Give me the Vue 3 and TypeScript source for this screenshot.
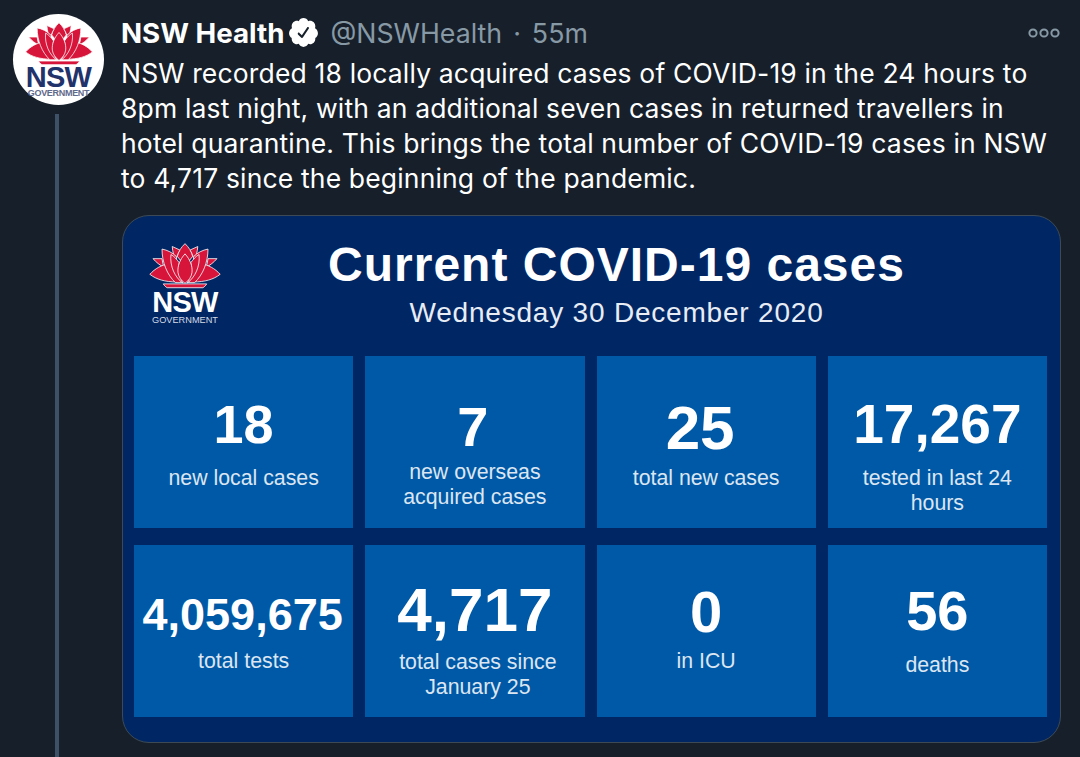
<template>
  <div class="tweet">
    <svg class="defs" width="0" height="0" aria-hidden="true">
      <symbol id="waratah" viewBox="-2 -2 224 144">
        <g fill="#d7153a" stroke="#fff" stroke-width="2.5" stroke-linejoin="round">
          <path d="M110 0C122 12 132 26 134 40L110 70L86 40C88 26 98 12 110 0Z" />
          <path d="M70 9L94 20C90 28 86 34 84 42L74 34C72 26 71 18 70 9Z" />
          <path d="M150 9L126 20C130 28 134 34 136 42L146 34C148 26 149 18 150 9Z" />
          <path d="M10 47H38C39 56 41 65 44 74C32 68 19 58 10 47Z" />
          <path d="M210 47H182C181 56 179 65 176 74C188 68 201 58 210 47Z" />
          <path d="M0 96C16 78 38 66 58 64C64 84 72 106 84 120C48 120 20 112 0 96Z" />
          <path d="M220 96C204 78 182 66 162 64C156 84 148 106 136 120C172 120 200 112 220 96Z" />
          <path d="M38 17C54 20 72 28 84 42C78 66 82 100 100 122H80C54 98 38 58 38 17Z" />
          <path d="M182 17C166 20 148 28 136 42C142 66 138 100 120 122H140C166 98 182 58 182 17Z" />
          <path d="M66 34C76 40 84 48 92 60C88 80 92 104 104 124C78 106 62 70 66 34Z" />
          <path d="M154 34C144 40 136 48 128 60C132 80 128 104 116 124C142 106 158 70 154 34Z" />
          <path d="M110 32C126 50 134 70 132 90C130 104 122 116 110 124C98 116 90 104 88 90C86 70 94 50 110 32Z" />
          <path d="M42 126H178C174 132 170 136 166 138H54C50 136 46 132 42 126Z" />
        </g>
      </symbol>
    </svg>

    <aside class="rail">
      <div class="avatar">
        <svg class="avatar-flower"><use href="#waratah" /></svg>
        <div class="avatar-nsw">NSW</div>
        <div class="avatar-gov">GOVERNMENT</div>
      </div>
      <div class="thread"></div>
    </aside>

    <main class="content">
      <header class="head">
        <span class="name">NSW Health</span>
        <svg class="badge" viewBox="0 0 24 24">
          <path fill="#fff" d="M22.5 12.5c0-1.58-.875-2.95-2.148-3.6.154-.435.238-.905.238-1.4 0-2.21-1.71-3.998-3.818-3.998-.47 0-.92.084-1.336.25C14.818 2.415 13.51 1.5 12 1.5s-2.816.917-3.437 2.25c-.415-.165-.866-.25-1.336-.25-2.11 0-3.818 1.79-3.818 4 0 .494.083.964.237 1.4-1.272.65-2.147 2.018-2.147 3.6 0 1.495.782 2.798 1.942 3.486-.02.17-.032.34-.032.514 0 2.21 1.708 4 3.818 4 .47 0 .92-.086 1.335-.25.62 1.334 1.926 2.25 3.437 2.25 1.512 0 2.818-.916 3.437-2.25.415.163.865.248 1.336.248 2.11 0 3.818-1.79 3.818-4 0-.174-.012-.344-.033-.513 1.158-.687 1.943-1.99 1.943-3.484zm-6.616-3.334l-4.334 6.5c-.145.217-.382.334-.625.334-.143 0-.288-.04-.416-.126l-.115-.094-2.415-2.415c-.293-.293-.293-.768 0-1.06s.768-.294 1.06 0l1.77 1.767 3.825-5.74c.23-.345.696-.436 1.04-.207.346.23.44.696.21 1.04z" />
        </svg>
        <span class="meta">@NSWHealth · 55m</span>
        <svg class="more" viewBox="0 0 32 12">
          <circle cx="5" cy="6" r="3.6" />
          <circle cx="16" cy="6" r="3.6" />
          <circle cx="27" cy="6" r="3.6" />
        </svg>
      </header>

      <p class="text">
        NSW recorded 18 locally acquired cases of COVID-19 in the 24 hours to<br />
        8pm last night, with an additional seven cases in returned travellers in<br />
        hotel quarantine. This brings the total number of COVID-19 cases in NSW<br />
        to 4,717 since the beginning of the pandemic.
      </p>

      <section class="card">
        <div class="card-top">
          <div class="logo">
            <svg class="logo-flower"><use href="#waratah" /></svg>
            <div class="logo-nsw">NSW</div>
            <div class="logo-gov">GOVERNMENT</div>
          </div>
          <div class="titles">
            <h1>Current COVID-19 cases</h1>
            <h2>Wednesday 30 December 2020</h2>
          </div>
        </div>

        <div class="grid">
          <div v-for="s in stats" :key="s.label" class="tile" :style="{ paddingTop: s.top + 'px' }">
            <div class="num" :style="{ fontSize: s.size + 'px', paddingRight: s.pad + 'px' }">{{ s.value }}</div>
            <div class="label" :style="{ marginTop: s.gap + 'px', paddingLeft: s.labelPad + 'px' }">{{ s.label }}</div>
          </div>
        </div>
      </section>
    </main>
  </div>
</template>

<script setup lang="ts">
interface Stat {
  value: string
  label: string
  size: number
  top: number
  gap: number
  pad: number
  labelPad: number
}

// the tiles in the graphic are not evenly set, so each one carries its own spacing
const stats: Stat[] = [
  { value: '18', label: 'new local cases', size: 54, top: 40, gap: 14, pad: 0, labelPad: 0 },
  { value: '7', label: 'new overseas\nacquired cases', size: 56, top: 43, gap: 5, pad: 4, labelPad: 0 },
  { value: '25', label: 'total new cases', size: 62, top: 44, gap: 10, pad: 12, labelPad: 0 },
  { value: '17,267', label: 'tested in last 24\nhours', size: 55, top: 40, gap: 14, pad: 0, labelPad: 0 },
  { value: '4,059,675', label: 'total tests', size: 45, top: 42, gap: 6, pad: 2, labelPad: -2 },
  { value: '4,717', label: 'total cases since\nJanuary 25', size: 62, top: 37, gap: 12, pad: 0, labelPad: 6 },
  { value: '0', label: 'in ICU', size: 58, top: 39, gap: 9, pad: 0, labelPad: 0 },
  { value: '56', label: 'deaths', size: 56, top: 38, gap: 14, pad: 0, labelPad: 0 }
]
</script>

<style scoped>
.defs {
  position: absolute;
}
.tweet {
  display: flex;
  height: 757px;
  overflow: hidden;
  background: #17202a;
  color: #fff;
  font-family: Inter, 'Liberation Sans', sans-serif;
}
.rail {
  width: 121px;
  flex: none;
  padding: 14px 0 0 13px;
  box-sizing: border-box;
  display: flex;
  flex-direction: column;
}
.avatar {
  width: 91px;
  height: 91px;
  border-radius: 50%;
  background: #fff;
  display: flex;
  flex-direction: column;
  align-items: center;
  font-family: 'Liberation Sans', sans-serif;
}
.avatar-flower {
  width: 68px;
  height: 44px;
  margin-top: 8px;
}
.avatar-nsw {
  font-size: 29px;
  line-height: 23px;
  font-weight: 700;
  letter-spacing: -0.8px;
  color: #22336b;
}
.avatar-gov {
  font-size: 9px;
  line-height: 9px;
  font-weight: 700;
  letter-spacing: -0.3px;
  color: #5f6a8c;
}
.thread {
  width: 4px;
  flex: 1;
  margin: 9px 0 0 42px;
  background: #3d5266;
}
.content {
  width: 940px;
  flex: none;
}
.head {
  height: 37px;
  margin-top: 14px;
  display: flex;
  align-items: center;
}
.name {
  font-size: 27.7px;
  font-weight: 700;
}
.badge {
  width: 33px;
  height: 33px;
  margin-left: 3px;
}
.meta {
  margin-left: 10px;
  font-size: 26.75px;
  word-spacing: 3.5px;
  color: #8899a6;
}
.more {
  width: 32px;
  height: 12px;
  margin-left: auto;
  margin-right: 1px;
  fill: none;
  stroke: #8899a6;
  stroke-width: 2;
}
.text {
  margin: 5px 0 0;
  font-size: 26.5px;
  letter-spacing: 0.16px;
  line-height: 35px;
  white-space: nowrap;
}
.card {
  width: 939px;
  height: 528px;
  margin: 19px 0 0 1px;
  box-sizing: border-box;
  border: 1px solid #3d4a55;
  border-radius: 27px;
  background: #002664;
  font-family: 'Liberation Sans', sans-serif;
  padding: 0 13px 0 11px;
}
.card-top {
  height: 140px;
  display: flex;
}
.logo {
  width: 74px;
  margin: 27px 0 0 14px;
  display: flex;
  flex-direction: column;
  align-items: center;
  flex: none;
}
.logo-flower {
  width: 74px;
  height: 46px;
}
.logo-nsw {
  font-size: 29px;
  line-height: 26px;
  font-weight: 700;
  letter-spacing: -0.8px;
}
.logo-gov {
  font-size: 9.2px;
  line-height: 10px;
  color: #d5dbe6;
}
.titles {
  flex: 1;
  text-align: center;
  padding-right: 36px;
}
h1 {
  margin: 22px 0 0;
  font-size: 48px;
  letter-spacing: 1px;
  line-height: 54px;
  font-weight: 700;
}
h2 {
  margin: 5px 0 0;
  font-size: 28px;
  letter-spacing: 0.8px;
  line-height: 32px;
  font-weight: 400;
  color: #e8edf5;
}
.grid {
  display: grid;
  grid-template-columns: repeat(4, 219.25px);
  grid-template-rows: 172px 172px;
  column-gap: 12px;
  row-gap: 17px;
}
.tile {
  background: #0059a6;
  text-align: center;
  box-sizing: border-box;
}
.num {
  height: 56px;
  line-height: 56px;
  font-weight: 700;
  white-space: nowrap;
}
.label {
  font-size: 21.3px;
  line-height: 25px;
  color: #dce6f2;
  white-space: pre-line;
}
</style>

<style>
html,
body {
  margin: 0;
  background: #17202a;
}
</style>
